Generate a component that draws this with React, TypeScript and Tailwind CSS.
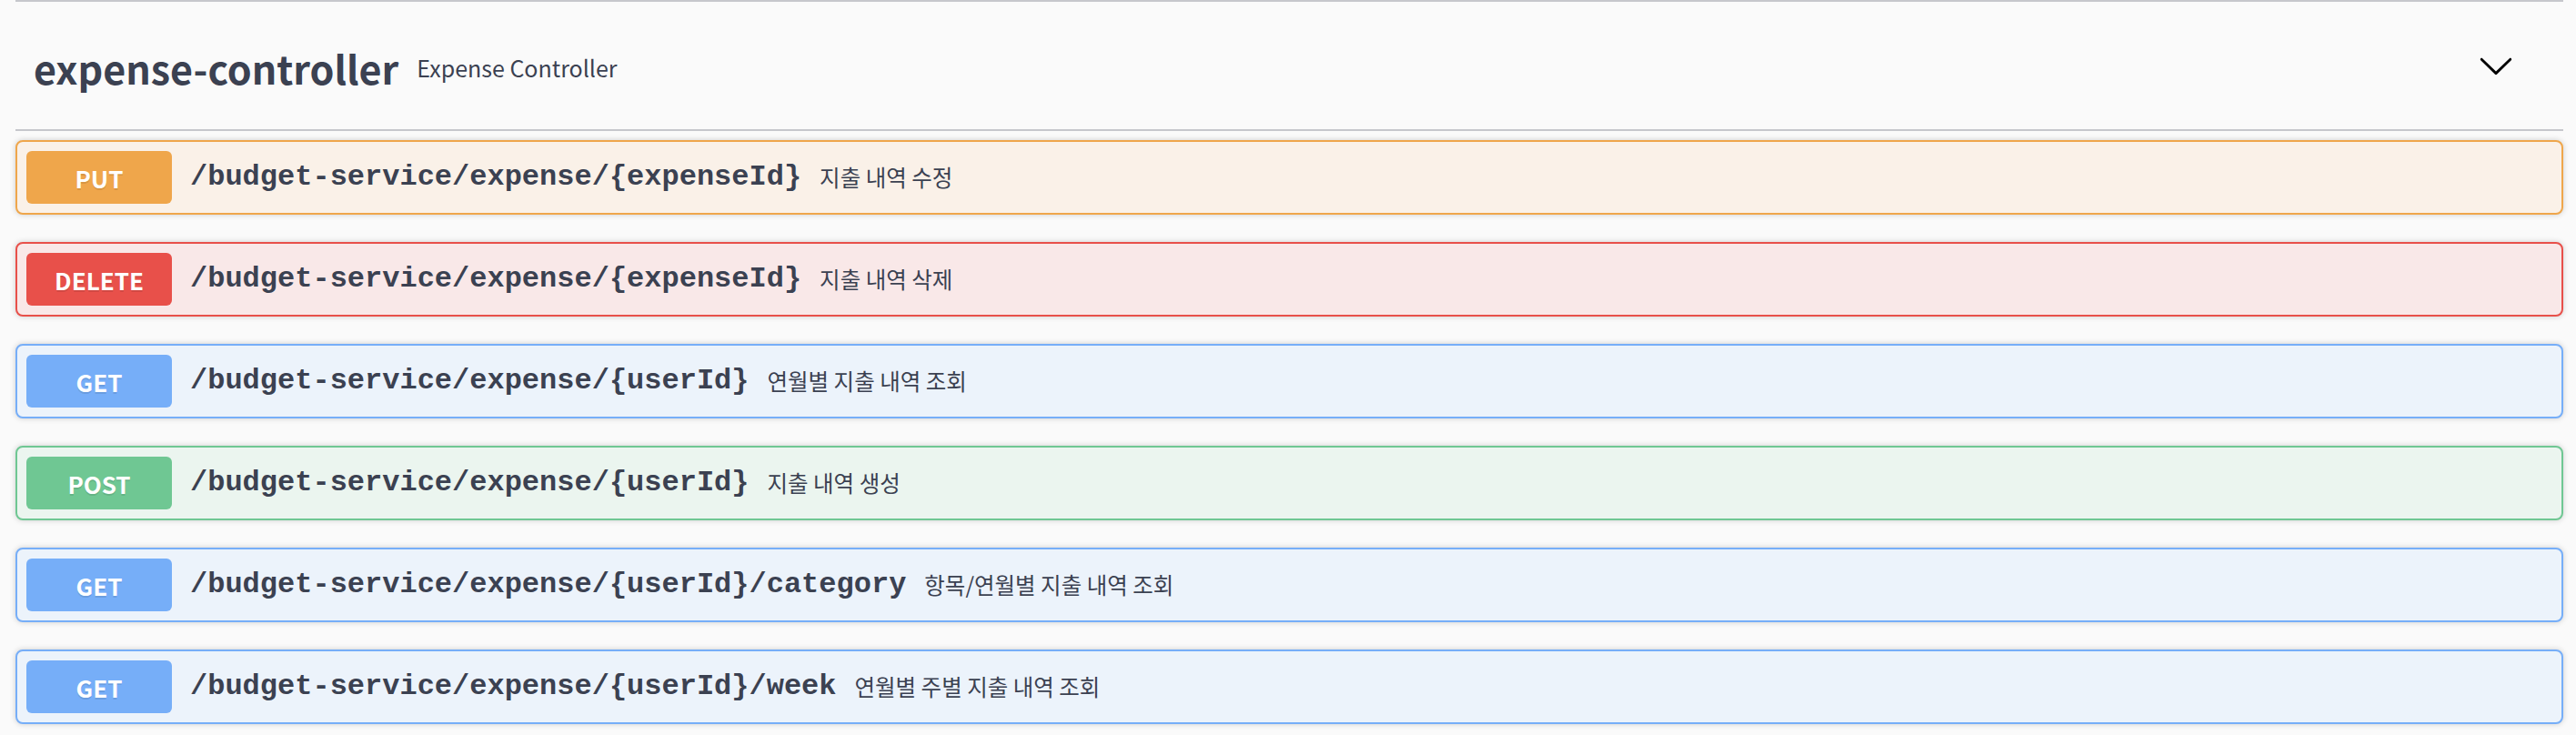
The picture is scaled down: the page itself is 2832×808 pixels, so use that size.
import React from 'react';

type Method = 'PUT' | 'DELETE' | 'GET' | 'POST';

const methodStyles: Record<Method, { box: string; badge: string }> = {
  PUT: { box: 'bg-[#faf1e8] border-[#efa64b]', badge: 'bg-[#efa64b]' },
  DELETE: { box: 'bg-[#f9e8e8] border-[#e8504a]', badge: 'bg-[#e8504a]' },
  GET: { box: 'bg-[#ecf3fb] border-[#76aef8]', badge: 'bg-[#76aef8]' },
  POST: { box: 'bg-[#ebf5ef] border-[#6fc793]', badge: 'bg-[#6fc793]' },
};

const operations: { method: Method; path: string; summary: string }[] = [
  { method: 'PUT', path: '/budget-service/expense/{expenseId}', summary: '지출 내역 수정' },
  { method: 'DELETE', path: '/budget-service/expense/{expenseId}', summary: '지출 내역 삭제' },
  { method: 'GET', path: '/budget-service/expense/{userId}', summary: '연월별 지출 내역 조회' },
  { method: 'POST', path: '/budget-service/expense/{userId}', summary: '지출 내역 생성' },
  { method: 'GET', path: '/budget-service/expense/{userId}/category', summary: '항목/연월별 지출 내역 조회' },
  { method: 'GET', path: '/budget-service/expense/{userId}/week', summary: '연월별 주별 지출 내역 조회' },
];

function Chevron() {
  return (
    <svg width="40" height="40" viewBox="0 0 20 20" className="shrink-0" aria-hidden="true">
      <path
        fill="#000"
        d="M17.418 6.109c.272-.268.709-.268.979 0s.271.701 0 .969l-7.908 7.83c-.27.268-.707.268-.979 0l-7.908-7.83c-.27-.268-.27-.701 0-.969.271-.268.709-.268.979 0L10 13.25l7.418-7.141z"
      />
    </svg>
  );
}

export default function App() {
  return (
    <div className="min-h-screen w-full bg-[#fafafa] pl-[17px] pr-[14px] text-[#3b4151] font-['Noto_Sans_CJK_KR','Noto_Sans',sans-serif]">
      {/* Tag header */}
      <div className="flex h-[144px] items-center border-y-2 border-[#c6c7cc] pl-[20px] pr-[54px]">
        <h3 className="flex flex-1 items-center pt-[4px]">
          <span className="text-[43px] font-bold leading-none">expense-controller</span>
          <small className="px-[20px] text-[25px] font-normal leading-none">Expense Controller</small>
        </h3>
        <Chevron />
      </div>

      {/* Operations */}
      <div className="mt-[10px] flex flex-col gap-[30px]">
        {operations.map((op, i) => (
          <div
            key={i}
            className={`flex h-[82px] items-center rounded-[8px] border-2 p-[10px] shadow-[0_0_6px_rgba(0,0,0,0.19)] ${methodStyles[op.method].box}`}
          >
            <span
              className={`flex h-[58px] w-[160px] shrink-0 items-center justify-center rounded-[6px] text-[26px] font-bold text-white text-shadow-[0_2px_0_rgba(0,0,0,0.1)] ${methodStyles[op.method].badge}`}
            >
              {op.method}
            </span>
            <span className="px-[20px] font-['Liberation_Mono',monospace] text-[32px] font-bold">
              {op.path}
            </span>
            <span className="text-[24.5px]">{op.summary}</span>
          </div>
        ))}
      </div>
    </div>
  );
}
